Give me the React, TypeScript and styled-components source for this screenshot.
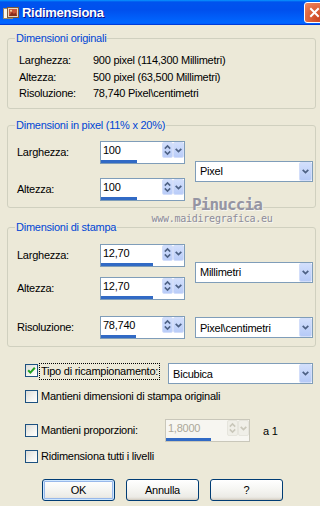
import React from "react";
import styled, { createGlobalStyle } from "styled-components";

const colors = {
  face: "#ECE9D8",
  groupLine: "#D0D0BF",
  legend: "#0046D5",
  field: "#7F9DB9",
  fieldOff: "#C9C7BA",
  bar: "#316AC5",
  ink: "#4D6185",
  inkOff: "#C9C7BA",
  textOff: "#ACA899",
};

const GlobalStyle = createGlobalStyle`
  html, body { margin: 0; padding: 0; background: ${colors.face}; }
  body {
    font-family: "Liberation Sans", Arial, sans-serif;
    font-size: 11px;
    color: #000;
  }
`;

const Window = styled.div`
  width: 320px;
  height: 506px;
  position: relative;
  overflow: hidden;
  background: ${colors.face};
  display: flex;
  flex-direction: column;
  letter-spacing: -0.25px;
`;

const TitleBar = styled.div`
  flex: 0 0 25px;
  display: flex;
  align-items: center;
  padding-left: 3px;
  overflow: hidden;
  background: linear-gradient(
    180deg,
    #0997ff 0%,
    #0053ee 8%,
    #0050ee 40%,
    #0066ff 88%,
    #0066ff 93%,
    #005bff 95%,
    #003dd7 96%,
    #003dd7 100%
  );
`;

const TitleText = styled.span`
  margin-left: 3px;
  font-weight: bold;
  font-size: 13px;
  letter-spacing: -0.3px;
  color: #fff;
  text-shadow: 1px 1px #0f1089;
`;

const CloseBtn = styled.span`
  margin-left: auto;
  margin-right: -5px;
  width: 21px;
  height: 21px;
  box-sizing: border-box;
  border: 1px solid #fff;
  border-radius: 3px;
  display: flex;
  align-items: center;
  justify-content: center;
  background: radial-gradient(circle at 70% 80%, #cc4622 0%, #e0683f 55%, #f08a66 100%);
`;

const Body = styled.div`
  flex: 1;
  padding: 0 4px 0 7px;
  display: flex;
  flex-direction: column;
`;

const Group = styled.fieldset<{ $mt: number }>`
  margin: ${(p) => p.$mt}px 0 0;
  padding: 0;
  min-width: 0;
  border: 1px solid ${colors.groupLine};
  border-radius: 3px;
`;

const Legend = styled.legend`
  margin-left: 7px;
  padding: 0 1px;
  color: ${colors.legend};
  line-height: 13px;
`;

const InfoGrid = styled.div`
  display: grid;
  grid-template-columns: 74px auto;
  grid-auto-rows: 16.5px;
  line-height: 16.5px;
  padding: 7px 0 6px 11px;
`;

const GroupInner = styled.div<{ $pt: number; $pb: number }>`
  padding: ${(p) => p.$pt}px 2px ${(p) => p.$pb}px 9px;
`;

const UnitGrid = styled.div<{ $rows: number; $gap: number; $mt?: number }>`
  display: grid;
  grid-template-columns: 83px 85px 128px;
  grid-template-rows: repeat(${(p) => p.$rows}, 23px);
  row-gap: ${(p) => p.$gap}px;
  align-items: center;
  margin-top: ${(p) => p.$mt || 0}px;
`;

const FieldLabel = styled.span`
  line-height: 13px;
`;

const ComboSlot = styled.div`
  grid-column: 3;
  grid-row: 1 / -1;
  align-self: center;
  padding-left: 10px;
`;

/* spin box with its progress bar */
const SpinFrame = styled.div<{ $off?: boolean }>`
  width: 85px;
  height: 23px;
  box-sizing: border-box;
  border: 1px solid ${(p) => (p.$off ? colors.fieldOff : colors.field)};
  background: ${(p) => (p.$off ? "#F7F6F1" : "#fff")};
  display: flex;
  flex-direction: column;
`;

const SpinTop = styled.div`
  display: flex;
  height: 16px;
`;

const SpinText = styled.span<{ $off?: boolean }>`
  flex: 1;
  padding-left: 2px;
  line-height: 16px;
  color: ${(p) => (p.$off ? colors.textOff : "#000")};
`;

const SpinBtn = styled.span<{ $off?: boolean }>`
  width: 11px;
  height: 16px;
  box-sizing: border-box;
  display: flex;
  align-items: center;
  justify-content: center;
  border: 1px solid ${(p) => (p.$off ? "#E6E5DD" : "#D3DEFA")};
  border-radius: 2px;
  background: ${(p) =>
    p.$off ? "#F0EFE8" : "linear-gradient(180deg, #D2DFFC 0%, #B9CCF8 100%)"};
`;

const BarTrack = styled.div`
  padding-top: 2px;
`;

const Bar = styled.div<{ $w: number }>`
  width: ${(p) => p.$w}px;
  height: 3px;
  background: ${colors.bar};
`;

/* combo box */
const ComboFrame = styled.div<{ $w: number; $h: number }>`
  width: ${(p) => p.$w}px;
  height: ${(p) => p.$h}px;
  box-sizing: border-box;
  border: 1px solid ${colors.field};
  background: #fff;
  display: flex;
`;

const ComboText = styled.span`
  flex: 1;
  padding-left: 4px;
  display: flex;
  align-items: center;
`;

const ComboBtn = styled.span`
  width: 13px;
  box-sizing: border-box;
  display: flex;
  align-items: center;
  justify-content: center;
  border: 1px solid #D3DEFA;
  border-radius: 2px;
  background: linear-gradient(180deg, #D2DFFC 0%, #B6CAF7 100%);
`;

/* options under the groups */
const Options = styled.div`
  margin-top: 16px;
  padding-left: 18px;
  display: flex;
  flex-direction: column;
`;

const OptionRow = styled.div<{ $mt?: number; $h: number; $top?: boolean }>`
  display: flex;
  align-items: ${(p) => (p.$top ? "flex-start" : "center")};
  height: ${(p) => p.$h}px;
  margin-top: ${(p) => p.$mt || 0}px;
`;

const Box = styled.span<{ $mt?: number }>`
  flex: none;
  width: 13px;
  height: 13px;
  box-sizing: border-box;
  margin-top: ${(p) => p.$mt || 0}px;
  border: 1px solid #1C5180;
  background: linear-gradient(135deg, #DCDCD7 0%, #F2F2EE 55%, #FFFFFF 100%);
  display: flex;
  align-items: center;
  justify-content: center;
`;

const OptionText = styled.span<{ $w?: number }>`
  margin-left: 3px;
  line-height: 13px;
  width: ${(p) => (p.$w ? `${p.$w}px` : "auto")};
  flex: none;
`;

const FocusText = styled.span`
  margin-left: 1px;
  padding: 0 1px;
  height: 17px;
  line-height: 15px;
  box-sizing: border-box;
  border: 1px dotted #000;
`;

const ComboGap = styled.div`
  margin-left: 8px;
`;

const Suffix = styled.span`
  margin-left: 13px;
`;

const ButtonRow = styled.div`
  margin: 16px 0 0 17px;
  display: flex;
  gap: 11px;
`;

const Btn = styled.button<{ $default?: boolean }>`
  width: 73px;
  height: 22px;
  padding: 0;
  border: 1px solid #003C74;
  border-radius: 3px;
  font: 11px "Liberation Sans", Arial, sans-serif;
  letter-spacing: -0.25px;
  color: #000;
  background: linear-gradient(180deg, #ffffff 0%, #f6f6f3 45%, #ecebe6 85%, #d6d0c5 100%);
  box-shadow: ${(p) =>
    p.$default
      ? "inset 0 0 0 1px #cee7ff, inset 0 0 0 2px #98b8ea"
      : "inset 0 -1px 0 #d6d0c5"};
`;

/* watermark lying over the groups */
const Mark = styled.div`
  position: absolute;
  left: 150px;
  top: 196px;
  width: 124px;
  text-align: center;
  font-family: "DejaVu Sans Mono", monospace;
  color: #8c8c9a;
  text-shadow: 1px 1px 0 #f7f6f0;
  pointer-events: none;
`;

const MarkName = styled.div`
  font-size: 16px;
  font-weight: bold;
  line-height: 17px;
  letter-spacing: -0.9px;
  padding-left: 30px;
  color: #9595a3;
`;

const MarkSite = styled.div`
  font-size: 10px;
  line-height: 12px;
  letter-spacing: -0.25px;
`;

/* glyphs */
const DownGlyph = ({ color }: { color: string }) => (
  <svg width="7" height="5" viewBox="0 0 7 5">
    <polyline points="0.7,0.8 3.5,3.6 6.3,0.8" fill="none" stroke={color} strokeWidth="1.7" />
  </svg>
);

const UpDownGlyph = ({ color }: { color: string }) => (
  <svg width="7" height="12" viewBox="0 0 7 12">
    <polyline points="0.8,4.6 3.5,1.9 6.2,4.6" fill="none" stroke={color} strokeWidth="1.5" />
    <polyline points="0.8,7.4 3.5,10.1 6.2,7.4" fill="none" stroke={color} strokeWidth="1.5" />
  </svg>
);

const CheckGlyph = () => (
  <svg width="9" height="9" viewBox="0 0 9 9">
    <polyline points="1.2,4.2 3.4,6.6 7.8,1.8" fill="none" stroke="#21A121" strokeWidth="2" />
  </svg>
);

const AppIcon = () => (
  <svg width="16" height="16" viewBox="0 0 16 16">
    <rect x="0.5" y="3.5" width="9" height="10" fill="#fbf6ea" stroke="#9c8a6c" />
    <rect x="4.5" y="2.5" width="11" height="10" fill="#e9d9bd" stroke="#7d5a3c" />
    <rect x="6" y="4" width="8" height="7" fill="#c9573a" />
    <path d="M6 11 L9 7 L11 9 L12.5 7.5 L14 11 Z" fill="#8a2f1c" />
    <circle cx="8" cy="5.8" r="1" fill="#f6d9a0" />
  </svg>
);

const CloseGlyph = () => (
  <svg width="11" height="11" viewBox="0 0 11 11">
    <path d="M2 2 L9 9 M9 2 L2 9" stroke="#fff" strokeWidth="2" strokeLinecap="square" />
  </svg>
);

function Spin({ value, bar, off }: { value: string; bar: number; off?: boolean }) {
  const ink = off ? colors.inkOff : colors.ink;
  return (
    <SpinFrame $off={off}>
      <SpinTop>
        <SpinText $off={off}>{value}</SpinText>
        <SpinBtn $off={off}>
          <UpDownGlyph color={ink} />
        </SpinBtn>
        <SpinBtn $off={off}>
          <DownGlyph color={ink} />
        </SpinBtn>
      </SpinTop>
      <BarTrack>
        <Bar $w={bar} />
      </BarTrack>
    </SpinFrame>
  );
}

function Combo({ value, width, height = 21 }: { value: string; width: number; height?: number }) {
  return (
    <ComboFrame $w={width} $h={height}>
      <ComboText>{value}</ComboText>
      <ComboBtn>
        <DownGlyph color={colors.ink} />
      </ComboBtn>
    </ComboFrame>
  );
}

function Option({ label, checked, mt }: { label: string; checked?: boolean; mt: number }) {
  return (
    <OptionRow $mt={mt} $h={13}>
      <Box>{checked ? <CheckGlyph /> : null}</Box>
      <OptionText>{label}</OptionText>
    </OptionRow>
  );
}

export default function App() {
  return (
    <>
      <GlobalStyle />
      <Window>
        <TitleBar>
          <AppIcon />
          <TitleText>Ridimensiona</TitleText>
          <CloseBtn>
            <CloseGlyph />
          </CloseBtn>
        </TitleBar>
        <Body>
          <Group $mt={7}>
            <Legend>Dimensioni originali</Legend>
            <InfoGrid>
              <span>Larghezza:</span>
              <span>900 pixel (114,300 Millimetri)</span>
              <span>Altezza:</span>
              <span>500 pixel (63,500 Millimetri)</span>
              <span>Risoluzione:</span>
              <span>78,740 Pixel\centimetri</span>
            </InfoGrid>
          </Group>

          <Group $mt={10.5}>
            <Legend>Dimensioni in pixel (11% x 20%)</Legend>
            <GroupInner $pt={9} $pb={6}>
              <UnitGrid $rows={2} $gap={14}>
                <ComboSlot>
                  <Combo value="Pixel" width={118} />
                </ComboSlot>
                <FieldLabel>Larghezza:</FieldLabel>
                <Spin value="100" bar={36} />
                <FieldLabel>Altezza:</FieldLabel>
                <Spin value="100" bar={36} />
              </UnitGrid>
            </GroupInner>
          </Group>

          <Group $mt={13}>
            <Legend>Dimensioni di stampa</Legend>
            <GroupInner $pt={10} $pb={7}>
              <UnitGrid $rows={2} $gap={10}>
                <ComboSlot>
                  <Combo value="Millimetri" width={118} />
                </ComboSlot>
                <FieldLabel>Larghezza:</FieldLabel>
                <Spin value="12,70" bar={52} />
                <FieldLabel>Altezza:</FieldLabel>
                <Spin value="12,70" bar={52} />
              </UnitGrid>
              <UnitGrid $rows={1} $gap={0} $mt={16}>
                <ComboSlot>
                  <Combo value="Pixel\centimetri" width={118} />
                </ComboSlot>
                <FieldLabel>Risoluzione:</FieldLabel>
                <Spin value="78,740" bar={35} />
              </UnitGrid>
            </GroupInner>
          </Group>

          <Options>
            <OptionRow $h={21} $top>
              <Box $mt={1}>
                <CheckGlyph />
              </Box>
              <FocusText>Tipo di ricampionamento:</FocusText>
              <ComboGap>
                <Combo value="Bicubica" width={145} />
              </ComboGap>
            </OptionRow>
            <Option label="Mantieni dimensioni di stampa originali" mt={6} />
            <OptionRow $mt={16} $h={23}>
              <Box />
              <OptionText $w={124}>Mantieni proporzioni:</OptionText>
              <Spin value="1,8000" bar={45} off />
              <Suffix>a 1</Suffix>
            </OptionRow>
            <Option label="Ridimensiona tutti i livelli" mt={8} />
            <ButtonRow>
              <Btn $default>OK</Btn>
              <Btn>Annulla</Btn>
              <Btn>?</Btn>
            </ButtonRow>
          </Options>
        </Body>

        <Mark>
          <MarkName>Pinuccia</MarkName>
          <MarkSite>www.maidiregrafica.eu</MarkSite>
        </Mark>
      </Window>
    </>
  );
}
